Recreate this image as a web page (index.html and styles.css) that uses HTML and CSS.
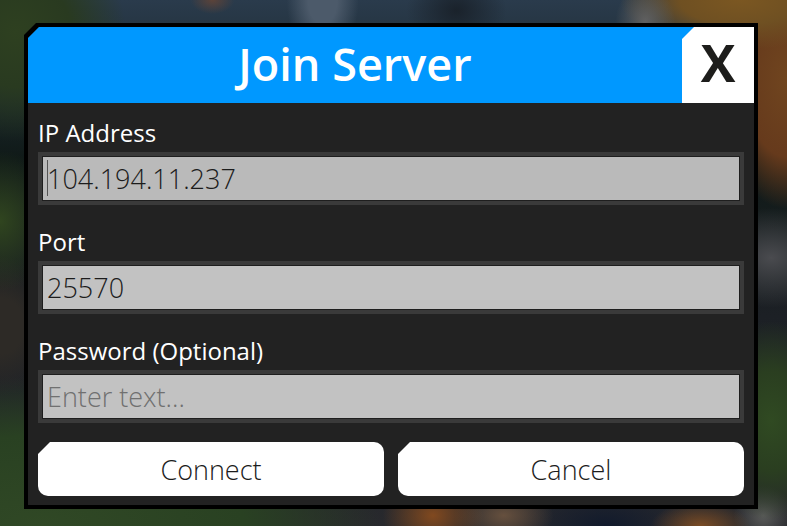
FILE: index.html
```
<!DOCTYPE html>
<html lang="en">
<head>
<meta charset="utf-8">
<meta name="viewport" content="width=device-width,initial-scale=1">
<title>Join Server</title>
<link rel="stylesheet" href="styles.css">
</head>
<body>
  <div class="dialog" role="dialog" aria-labelledby="title">
    <form class="panel">
      <div class="header">
        <h1 class="title" id="title">Join Server</h1>
        <button class="close" type="button" aria-label="Close">X</button>
      </div>
      <div class="content">
        <div class="field">
          <label for="ip">IP Address</label>
          <div class="input-box focused"><input id="ip" type="text" value="104.194.11.237"></div>
        </div>
        <div class="field">
          <label for="port">Port</label>
          <div class="input-box"><input id="port" type="text" value="25570"></div>
        </div>
        <div class="field">
          <label for="password">Password (Optional)</label>
          <div class="input-box"><input id="password" type="password" placeholder="Enter text..."></div>
        </div>
        <div class="actions">
          <button class="btn" type="button">Connect</button>
          <button class="btn" type="button">Cancel</button>
        </div>
      </div>
    </form>
  </div>
</body>
</html>
```
FILE: styles.css
```
* {
  box-sizing: border-box;
  padding: 0;
  margin: 0;
}

/* out of focus game scene behind the dialog */
body {
  min-height: 100vh;
  padding: 23px 29px 17px 24px;
  font-family: "Open Sans", sans-serif;
  background-color: #20282e;
  background-image:
    radial-gradient(ellipse 22px 14px at 27% 0, #5c4339, transparent),
    radial-gradient(ellipse 30px 34px at 82% 4%, #606060, transparent),
    radial-gradient(ellipse 36px 60px at 41% 0, #4c5a6a 40%, transparent),
    radial-gradient(ellipse 50px 40px at 58% 2%, #1a222b, transparent),
    radial-gradient(ellipse 120px 50px at 94% 0, #7b5722, #6f5022 50%, transparent),
    radial-gradient(ellipse 70px 130px at 100% 15%, #70451f, #663a1c 60%, transparent),
    radial-gradient(ellipse 70px 50px at 98% 49%, #4a4b4f, transparent),
    radial-gradient(ellipse 70px 100px at 98% 80%, #304a22, #2a3e20 50%, transparent),
    radial-gradient(ellipse 110px 110px at 2% 6%, #2e4020, #293a20 50%, transparent),
    radial-gradient(ellipse 60px 70px at 0 42%, #30451f, transparent),
    radial-gradient(ellipse 60px 70px at 0 62%, #2d2a26 40%, transparent),
    radial-gradient(ellipse 340px 150px at 5% 100%, #304825, #294122 60%, transparent),
    radial-gradient(ellipse 50px 40px at 55% 98%, #81491f, transparent),
    radial-gradient(ellipse 50px 30px at 64% 98%, #66503e, transparent),
    radial-gradient(ellipse 50px 24px at 89% 100%, #7a4b24, transparent),
    radial-gradient(ellipse 30px 30px at 97% 98%, #5a5b5a, transparent),
    radial-gradient(ellipse 90px 40px at 77% 100%, #111a2c, transparent),
    linear-gradient(#2a3b4c, #101a18 30%, #1c2025 60%, #28292d);
}

.dialog {
  padding: 4px;
  background: #000;
  clip-path: polygon(12px 0, 100% 0, 100% 100%, 0 100%, 0 12px);
}

.panel {
  background: #222;
  clip-path: polygon(11px 0, 100% 0, 100% 100%, 0 100%, 0 11px);
}

.header {
  display: flex;
  height: 76px;
  background: #0098ff;
}

.title {
  flex: 1;
  color: #fff;
  font-size: 45px;
  font-weight: 600;
  line-height: 74px;
  text-align: center;
}

.close {
  width: 72px;
  padding-bottom: 6px;
  border: 0;
  background: #fff;
  color: #1d1d1b;
  font: bold 52px/68px "Open Sans", sans-serif;
  clip-path: polygon(12px 0, 100% 0, 100% 100%, 0 100%, 0 12px);
  cursor: pointer;
}

.content {
  padding: 12px 10px 9px;
}

.field {
  margin-bottom: 19px;
}

.field label {
  display: block;
  height: 37px;
  color: #fff;
  font-size: 24px;
  line-height: 36px;
}

.input-box {
  position: relative;
  padding: 4px;
  background: #3a3a3a;
}

.input-box input {
  display: block;
  width: 100%;
  height: 45px;
  padding: 0 4px;
  border: 1px solid #1e1e1e;
  border-radius: 0;
  outline: 0;
  background: #c2c2c2;
  color: #1c1c1c;
  font: 360 27px "Open Sans", sans-serif;
}

.input-box input::placeholder {
  color: #707070;
  opacity: 1;
}

.focused input {
  background: #bababa;
}

/* caret */
.focused::before {
  content: "";
  position: absolute;
  top: 8px;
  left: 9px;
  width: 1px;
  height: 36px;
  background: #555;
}

.actions {
  display: flex;
  gap: 14px;
}

.btn {
  flex: 1;
  height: 54px;
  border: 0;
  border-radius: 10px;
  background: #fff;
  color: #1c1c1c;
  font: 360 27px "Open Sans", sans-serif;
  clip-path: polygon(12px 0, 100% 0, 100% 100%, 0 100%, 0 12px);
  cursor: pointer;
}
```
